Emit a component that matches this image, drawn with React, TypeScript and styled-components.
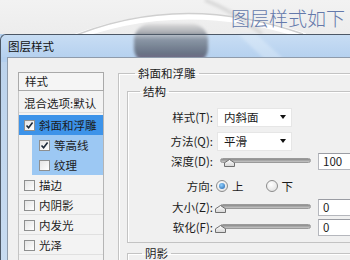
import React from 'react';
import styled, { createGlobalStyle } from 'styled-components';

const GlobalStyle = createGlobalStyle`
    html, body {
        margin : 0;
        padding : 0;
    }
    body {
        width : 350px;
        height : 260px;
        overflow : hidden;
        background : #efefef;
        font-family : "Noto Sans CJK SC", "Noto Sans", sans-serif;
        color : #1c1c1c;
    }
`

const Scene = styled.div`
    position : relative;
    width : 350px;
    height : 260px;
    overflow : hidden;
`

// the photo behind the dialog (blurred glass), drawn only as a picture
const Backdrop = styled.svg`
    position : absolute;
    top : 0;
    left : 0;
    z-index : 0;
`

const Heading = styled.div`
    position : relative;
    z-index : 1;
    height : 34px;
    box-sizing : border-box;
    padding : 6px 5px 0 0;
    display : flex;
    justify-content : flex-end;
    font-size : 19px;
    font-weight : 300;
    line-height : 24px;
    color : #6479ab;
`

const Window = styled.div`
    position : relative;
    z-index : 1;
    width : 380px;
    height : 240px;
    box-sizing : border-box;
    border : 1px solid #4d5866;
    border-right : none;
    border-bottom : none;
    border-top-left-radius : 6px;
    padding-left : 6px;
    background : linear-gradient(to bottom, transparent 0, transparent 27px, #bcd3ec 27px, #c9dcf1 100%);
    display : flex;
    flex-direction : column;
`

const TitleBar = styled.div`
    height : 27px;
    margin-left : -6px;
    padding-left : 7px;
    display : flex;
    align-items : center;
    font-size : 11.5px;
    color : #111;
    border-top-left-radius : 5px;
    background : linear-gradient(to bottom, rgba(225, 238, 250, 0.45), rgba(190, 215, 242, 0.25));
`

const Client = styled.div`
    flex : 1;
    display : flex;
    border : 1px solid #8e9bab;
    border-right : none;
    border-bottom : none;
    background : #f0f0f0;
    padding-left : 10px;
`

const LeftPane = styled.div`
    width : 86px;
    margin-top : 14px;
    display : flex;
    flex-direction : column;
`

const ListHeader = styled.div`
    height : 19px;
    box-sizing : border-box;
    border : 1px solid #a9a9a9;
    background : #f5f5f5;
    padding-left : 6px;
    font-size : 11.5px;
    line-height : 17px;
`

const ListBody = styled.div`
    flex : 1;
    padding-top : 2px;
    border-left : 1px solid #c4c4c4;
    border-right : 1px solid #b5b5b5;
    background : #f3f3f3;
`

const Item = styled.div<{ $level?: number; $sel?: 'main' | 'sub'; $gap?: number }>`
    height : 20px;
    box-sizing : border-box;
    margin-left : ${(p) => (p.$level ? 13 : 0)}px;
    margin-top : ${(p) => p.$gap || 0}px;
    padding-left : ${(p) => (p.$level ? 7 : 5)}px;
    display : flex;
    align-items : center;
    gap : 4px;
    font-size : 11.5px;
    background : ${(p) => (p.$sel === 'main' ? '#3d93e9' : p.$sel === 'sub' ? '#9cc8f3' : 'transparent')};
    box-shadow : ${(p) => (p.$sel ? 'none' : 'inset 0 -1px 0 #e0e0e0')};
`

const Box = styled.span`
    width : 11px;
    height : 11px;
    box-sizing : border-box;
    border : 1px solid #8e8f8f;
    background : linear-gradient(135deg, #e4e4e4, #ffffff);
    display : inline-flex;
    align-items : center;
    justify-content : center;
    flex-shrink : 0;
`

const RightPane = styled.div`
    flex : 1;
    margin-left : 14px;
    margin-top : 8px;
`

const Group = styled.fieldset<{ $closed?: boolean; $gap?: number }>`
    margin : ${(p) => p.$gap || 0}px 0 0 0;
    min-width : 0;
    border : 1px solid #c3c3c3;
    border-right : none;
    border-bottom : ${(p) => (p.$closed ? '1px solid #c3c3c3' : 'none')};
    box-shadow : inset 1px 1px 0 #ffffff;
`

const OuterGroup = styled(Group)`
    padding : 4px 0 0 8px;
`

const InnerGroup = styled(Group)`
    padding : 9px 0 5px 0;
`

const Legend = styled.legend<{ $shift: number }>`
    margin-left : ${(p) => p.$shift}px;
    padding : 0 3px;
    font-size : 11.5px;
    line-height : 14px;
`

const Row = styled.div<{ $gap?: number }>`
    height : 20px;
    margin-top : ${(p) => p.$gap || 0}px;
    display : grid;
    grid-template-columns : 85px auto;
    column-gap : 4px;
    align-items : center;
`

const Label = styled.div`
    text-align : right;
    font-size : 11.5px;
    white-space : nowrap;
`

const Controls = styled.div`
    display : flex;
    align-items : center;
`

const Select = styled.div`
    width : 75px;
    height : 19px;
    box-sizing : border-box;
    background : #ffffff;
    border : 1px solid #e6e6e6;
    padding : 0 5px 0 6px;
    display : flex;
    align-items : center;
    justify-content : space-between;
    font-size : 11.5px;
`

const Arrow = styled.span`
    width : 0;
    height : 0;
    border-left : 3.5px solid transparent;
    border-right : 3.5px solid transparent;
    border-top : 4px solid #111;
`

const SliderWrap = styled.div`
    position : relative;
    width : 91px;
    height : 20px;
    margin-left : 3px;
`

const Track = styled.div`
    position : absolute;
    left : 0;
    right : 0;
    top : 7px;
    height : 5px;
    box-sizing : border-box;
    border : 1px solid #9a9a9a;
    border-radius : 3px;
    background : linear-gradient(to bottom, #8a8a8a, #c6c6c6);
`

const Thumb = styled.svg`
    position : absolute;
    top : 8px;
`

const Field = styled.div`
    width : 50px;
    height : 17px;
    box-sizing : border-box;
    margin-left : 7px;
    border : 1px solid #b5b7bd;
    border-top-color : #9a9ca3;
    background : #ffffff;
    padding-left : 4px;
    font-size : 11.5px;
    line-height : 15px;
`

const Radio = styled.span<{ $on?: boolean }>`
    width : 12px;
    height : 12px;
    box-sizing : border-box;
    border-radius : 50%;
    border : 1px solid #8c8c8c;
    background : radial-gradient(circle at 40% 35%, #ffffff, #dcdcdc);
    display : inline-flex;
    align-items : center;
    justify-content : center;
    margin-left : ${(p) => (p.$on ? -1 : 22)}px;
    &::after {
        content : '';
        width : 6px;
        height : 6px;
        border-radius : 50%;
        display : ${(p) => (p.$on ? 'block' : 'none')};
        background : radial-gradient(circle at 40% 35%, #8fd0ff, #1f5fa8);
    }
`

const RadioText = styled.span`
    margin-left : 4px;
    font-size : 11.5px;
`

const Check = () => (
    <svg width="9" height="9" viewBox="0 0 9 9">
        <path d="M1.5 4.5 L3.6 6.8 L7.6 1.6" fill="none" stroke="#1d2a3a" strokeWidth="1.6" />
    </svg>
)

const Slider = ({ pos }: { pos: number }) => (
    <SliderWrap>
        <Track />
        <Thumb width="11" height="8" viewBox="0 0 11 8" style={{ left: pos * 91 - 5 }}>
            <defs>
                <linearGradient id="thumbFill" x1="0" y1="0" x2="0" y2="1">
                    <stop offset="0" stopColor="#ffffff" />
                    <stop offset="1" stopColor="#d6d6d6" />
                </linearGradient>
            </defs>
            <polygon points="0.5,7.5 0.5,3.8 5.5,0.5 10.5,3.8 10.5,7.5" fill="url(#thumbFill)" stroke="#707070" />
        </Thumb>
    </SliderWrap>
)

const layers = [
    { name: '斜面和浮雕', level: 0, sel: 'main', on: true, gap: 2 },
    { name: '等高线', level: 1, sel: 'sub', on: true },
    { name: '纹理', level: 1, sel: 'sub', on: false },
    { name: '描边', level: 0, on: false },
    { name: '内阴影', level: 0, on: false },
    { name: '内发光', level: 0, on: false },
    { name: '光泽', level: 0, on: false },
] as const

const App = () => {
    return (
        <Scene>
            <GlobalStyle />
            <Backdrop width="350" height="70" viewBox="0 0 350 70">
                <defs>
                    <linearGradient id="paper" x1="0" y1="0" x2="0" y2="1">
                        <stop offset="0" stopColor="#f2f2f2" />
                        <stop offset="1" stopColor="#e7e7e7" />
                    </linearGradient>
                    <linearGradient id="cap" x1="0" y1="0" x2="0" y2="1">
                        <stop offset="0" stopColor="#dadada" />
                        <stop offset="0.22" stopColor="#a9acb2" />
                        <stop offset="0.38" stopColor="#515a6a" />
                        <stop offset="0.75" stopColor="#414858" />
                        <stop offset="0.92" stopColor="#6f4d6e" />
                        <stop offset="1" stopColor="#8a8a9a" />
                    </linearGradient>
                    <filter id="soft" x="-20%" y="-20%" width="140%" height="140%">
                        <feGaussianBlur stdDeviation="1.6" />
                    </filter>
                </defs>
                <rect x="0" y="0" width="350" height="70" fill="url(#paper)" />
                <path d="M62 42 Q178 -6 305 36" fill="none" stroke="#ffffff" strokeWidth="6" />
                <path d="M64 40 Q178 -10 303 34" fill="none" stroke="#cfcfcf" strokeWidth="1.5" />
                <path d="M205 0 Q235 12 262 34" fill="none" stroke="#d9d9d9" strokeWidth="4" filter="url(#soft)" />
                <rect x="0" y="34" width="350" height="36" fill="#b3cfee" />
                <polygon points="238,34 256,34 296,70 276,70" fill="#d6e6f7" opacity="0.7" filter="url(#soft)" />
                <rect x="134" y="24" width="74" height="40" rx="16" fill="url(#cap)" filter="url(#soft)" />
            </Backdrop>

            <Heading>图层样式如下</Heading>

            <Window>
                <TitleBar>图层样式</TitleBar>
                <Client>
                    <LeftPane>
                        <ListHeader>样式</ListHeader>
                        <ListBody>
                            <Item>混合选项:默认</Item>
                            {layers.map((l, i) => (
                                <Item key={i} $level={l.level} $sel={'sel' in l ? l.sel : undefined} $gap={'gap' in l ? l.gap : 0}>
                                    <Box>{l.on && <Check />}</Box>
                                    {l.name}
                                </Item>
                            ))}
                        </ListBody>
                    </LeftPane>

                    <RightPane>
                        <OuterGroup>
                            <Legend $shift={8}>斜面和浮雕</Legend>
                            <InnerGroup $closed>
                                <Legend $shift={12}>结构</Legend>
                                <Row>
                                    <Label>样式(T):</Label>
                                    <Controls>
                                        <Select>内斜面<Arrow /></Select>
                                    </Controls>
                                </Row>
                                <Row $gap={4}>
                                    <Label>方法(Q):</Label>
                                    <Controls>
                                        <Select>平滑<Arrow /></Select>
                                    </Controls>
                                </Row>
                                <Row>
                                    <Label>深度(D):</Label>
                                    <Controls>
                                        <Slider pos={0.1} />
                                        <Field>100</Field>
                                    </Controls>
                                </Row>
                                <Row $gap={5}>
                                    <Label>方向:</Label>
                                    <Controls>
                                        <Radio $on />
                                        <RadioText>上</RadioText>
                                        <Radio />
                                        <RadioText>下</RadioText>
                                    </Controls>
                                </Row>
                                <Row $gap={1}>
                                    <Label>大小(Z):</Label>
                                    <Controls>
                                        <Slider pos={0} />
                                        <Field>0</Field>
                                    </Controls>
                                </Row>
                                <Row>
                                    <Label>软化(F):</Label>
                                    <Controls>
                                        <Slider pos={0} />
                                        <Field>0</Field>
                                    </Controls>
                                </Row>
                            </InnerGroup>
                            <InnerGroup $gap={3}>
                                <Legend $shift={14}>阴影</Legend>
                            </InnerGroup>
                        </OuterGroup>
                    </RightPane>
                </Client>
            </Window>
        </Scene>
    )
}

export default App;
